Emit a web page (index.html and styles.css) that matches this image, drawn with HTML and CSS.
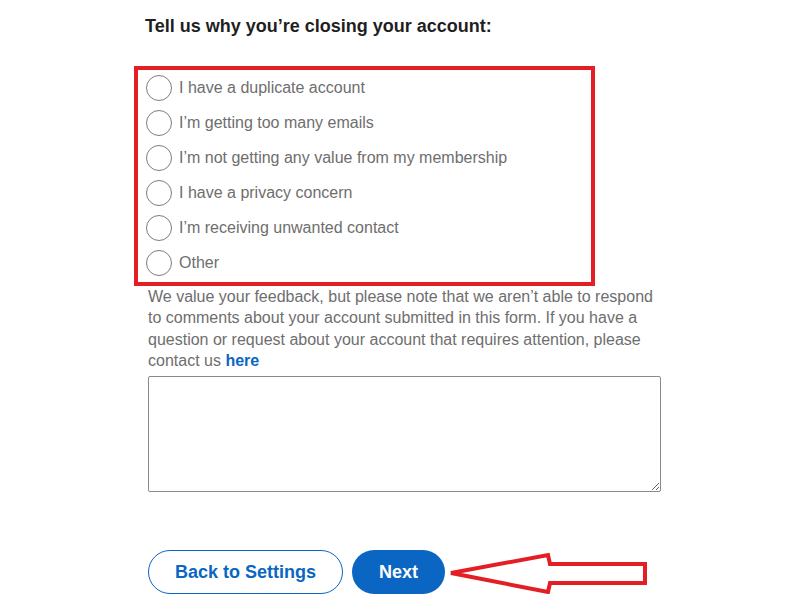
FILE: index.html
```html
<!DOCTYPE html>
<html lang="en">
<head>
<meta charset="utf-8">
<title>Close account</title>
<link rel="stylesheet" href="styles.css">
</head>
<body>
<main class="page">
  <h2 class="title">Tell us why you’re closing your account:</h2>
  <div class="reasons">
    <label class="reason"><span class="radio"></span><span>I have a duplicate account</span></label>
    <label class="reason"><span class="radio"></span><span>I’m getting too many emails</span></label>
    <label class="reason"><span class="radio"></span><span>I’m not getting any value from my membership</span></label>
    <label class="reason"><span class="radio"></span><span>I have a privacy concern</span></label>
    <label class="reason"><span class="radio"></span><span>I’m receiving unwanted contact</span></label>
    <label class="reason"><span class="radio"></span><span>Other</span></label>
  </div>
  <p class="note">We value your feedback, but please note that we aren’t able to respond to comments about your account submitted in this form. If you have a question or request about your account that requires attention, please contact us <a class="link" href="#">here</a></p>
  <textarea class="feedback"></textarea>
  <div class="actions">
    <button class="btn btn-outline">Back to Settings</button>
    <button class="btn btn-primary">Next</button>
    <svg class="arrow" width="210" height="50" viewBox="0 0 210 50">
      <polygon points="3,21 100,3 102,12 197,12 197,31 102,31 100,40" fill="none" stroke="#e31e24" stroke-width="4" stroke-linejoin="miter"/>
    </svg>
  </div>
</main>
</body>
</html>
```

FILE: styles.css
```css
html, body {
  margin: 0;
  padding: 0;
  background: #ffffff;
}

body {
  font-family: "Liberation Sans", Arial, sans-serif;
}

.page {
  width: 513px;
  margin-left: 148px;
  padding-top: 15px;
}

.title {
  margin: 0 0 29px -3px;
  font-size: 18px;
  line-height: 22px;
  font-weight: bold;
  color: #1f1f1f;
}

.reasons {
  margin-left: -14px;
  width: 445px;
  border: 4px solid #e31e24;
  padding: 0 0 2px 8px;
  box-sizing: content-box;
  display: flex;
  flex-direction: column;
}

.reason {
  display: flex;
  align-items: center;
  gap: 7px;
  height: 35px;
  font-size: 16px;
  color: #6e6e6e;
}

.radio {
  width: 24px;
  height: 24px;
  border: 1.5px solid #7d7d7d;
  border-radius: 50%;
  flex: none;
}

.note {
  margin: 0;
  font-size: 16px;
  line-height: 21.3px;
  color: #6e6e6e;
}

.link {
  color: #0a66c2;
  font-weight: bold;
  text-decoration: none;
}

.feedback {
  display: block;
  box-sizing: border-box;
  width: 513px;
  height: 116px;
  margin-top: 5px;
  border: 1px solid #8a8a8a;
  border-radius: 2px;
  resize: vertical;
}

.actions {
  position: relative;
  display: flex;
  gap: 9px;
  margin-top: 58px;
}

.btn {
  height: 44px;
  border-radius: 22px;
  font-family: "Liberation Sans", Arial, sans-serif;
  font-size: 18px;
  font-weight: bold;
  padding: 0;
  white-space: nowrap;
  box-sizing: border-box;
}

.btn-outline {
  width: 195px;
  background: #ffffff;
  color: #0a66c2;
  border: 1.5px solid #0a66c2;
}

.btn-primary {
  width: 93px;
  background: #0a66c2;
  color: #ffffff;
  border: none;
}

.arrow {
  position: absolute;
  left: 300px;
  top: 2px;
}
```
